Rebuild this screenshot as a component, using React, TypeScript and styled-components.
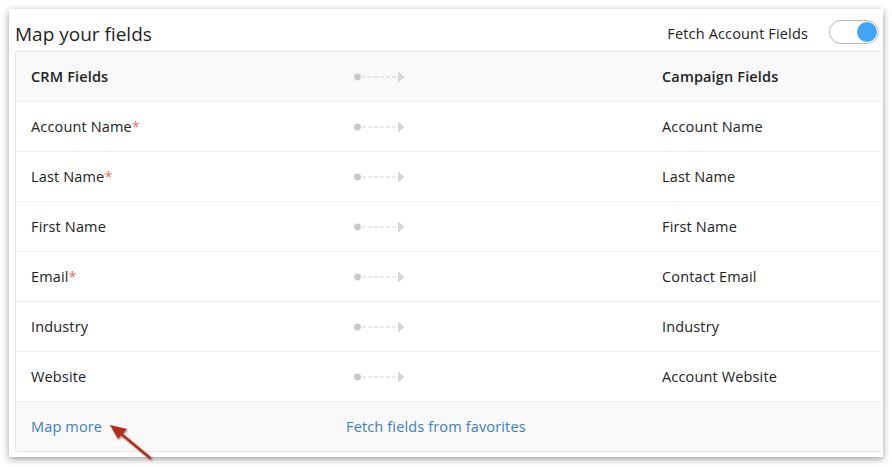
import React from "react";
import styled, { createGlobalStyle } from "styled-components";

const GlobalStyle = createGlobalStyle`
  html, body {
    margin: 0;
    padding: 0;
    background: #ffffff;
  }
  body {
    font-family: "Open Sans", "Liberation Sans", sans-serif;
    color: #222;
  }
`;

const Page = styled.div`
  position: relative;
  width: 892px;
  height: 467px;
  padding: 9px 0 0 9px;
  box-sizing: border-box;
`;

const Card = styled.div`
  width: 874px;
  height: 448px;
  background: #fff;
  box-shadow: 0 2px 7px rgba(0, 0, 0, 0.4);
  padding: 0 2px 0 6px;
  box-sizing: border-box;
  display: flex;
  flex-direction: column;
`;

const TopBar = styled.div`
  height: 42px;
  display: flex;
  align-items: center;
  justify-content: space-between;
`;

const Title = styled.h1`
  margin: 7px 0 0 0;
  font-size: 19px;
  font-weight: 400;
  color: #1f1f1f;
`;

const FetchToggle = styled.div`
  display: flex;
  align-items: center;
  gap: 21px;
  font-size: 14.5px;
  letter-spacing: 0.15px;
  color: #222;
  padding-top: 3px;
`;

const FetchLabel = styled.span`
  padding-top: 3px;
`;

const Switch = styled.div<{ on: boolean }>`
  width: 50px;
  height: 24px;
  box-sizing: border-box;
  border: 1px solid #b9b9b9;
  border-radius: 12px;
  background: #fff;
  display: flex;
  align-items: center;
  justify-content: ${({ on }) => (on ? "flex-end" : "flex-start")};
  padding: 0 1px;
  margin-right: 2px;
`;

const Knob = styled.div`
  width: 20px;
  height: 20px;
  border-radius: 50%;
  background: #42a5f6;
`;

const Panel = styled.div`
  border: 1px solid #e4e6ec;
  border-right: none;
  border-radius: 3px 0 0 3px;
  overflow: hidden;
`;

const Row = styled.div<{ shaded?: boolean }>`
  height: 50px;
  display: grid;
  grid-template-columns: 323px 308px 1fr;
  align-items: center;
  background: ${({ shaded }) => (shaded ? "#f9f9f9" : "#ffffff")};
  border-top: 1px solid #eceef2;
  box-sizing: border-box;
  font-size: 14.5px;
  letter-spacing: 0.15px;
  &:first-child {
    border-top: none;
    height: 49px;
  }
`;

const Cell = styled.div<{ bold?: boolean }>`
  padding-left: 15px;
  font-weight: ${({ bold }) => (bold ? 600 : 400)};
  color: #222;
`;

const ArrowCell = styled.div`
  padding-left: 15px;
  display: flex;
  align-items: center;
`;

const Required = styled.span`
  color: #e2735e;
`;

const Link = styled.a`
  color: #3d7fc1;
  text-decoration: none;
  cursor: pointer;
`;

const LinkCell = styled.div`
  padding-left: 7px;
`;

const Annotation = styled.svg`
  position: absolute;
  left: 100px;
  top: 415px;
  overflow: visible;
`;

const MapArrow = () => (
  <svg width="51" height="12" viewBox="0 0 51 12">
    <circle cx="3.5" cy="6" r="3.4" fill="#c9c9c9" />
    <line x1="8" y1="6" x2="44" y2="6" stroke="#d4d4d4" strokeWidth="1" strokeDasharray="4 2" />
    <path d="M44 0.5 L50.5 6 L44 11.5 Z" fill="#d6d6d6" />
  </svg>
);

const fields = [
  { crm: "Account Name", required: true, campaign: "Account Name" },
  { crm: "Last Name", required: true, campaign: "Last Name" },
  { crm: "First Name", required: false, campaign: "First Name" },
  { crm: "Email", required: true, campaign: "Contact Email" },
  { crm: "Industry", required: false, campaign: "Industry" },
  { crm: "Website", required: false, campaign: "Account Website" },
];

export default function App() {
  return (
    <Page>
      <GlobalStyle />
      <Card>
        <TopBar>
          <Title>Map your fields</Title>
          <FetchToggle>
            <FetchLabel>Fetch Account Fields</FetchLabel>
            <Switch on>
              <Knob />
            </Switch>
          </FetchToggle>
        </TopBar>
        <Panel>
          <Row shaded>
            <Cell bold>CRM Fields</Cell>
            <ArrowCell>
              <MapArrow />
            </ArrowCell>
            <Cell bold>Campaign Fields</Cell>
          </Row>
          {fields.map((f) => (
            <Row key={f.crm}>
              <Cell>
                {f.crm}
                {f.required && <Required>*</Required>}
              </Cell>
              <ArrowCell>
                <MapArrow />
              </ArrowCell>
              <Cell>{f.campaign}</Cell>
            </Row>
          ))}
          <Row shaded>
            <Cell>
              <Link>Map more</Link>
            </Cell>
            <LinkCell>
              <Link>Fetch fields from favorites</Link>
            </LinkCell>
            <div />
          </Row>
        </Panel>
      </Card>
      <Annotation width="60" height="50" viewBox="0 0 60 50">
        <defs>
          <filter id="sh" x="-50%" y="-50%" width="200%" height="200%">
            <feDropShadow dx="1" dy="1" stdDeviation="1" floodColor="#000" floodOpacity="0.45" />
          </filter>
        </defs>
        <g filter="url(#sh)">
          <line x1="50" y1="43" x2="20" y2="18" stroke="#b22f1c" strokeWidth="2.6" strokeLinecap="round" />
          <path d="M10 10 L27 14 L18 24 Z" fill="#b22f1c" />
        </g>
      </Annotation>
    </Page>
  );
}
